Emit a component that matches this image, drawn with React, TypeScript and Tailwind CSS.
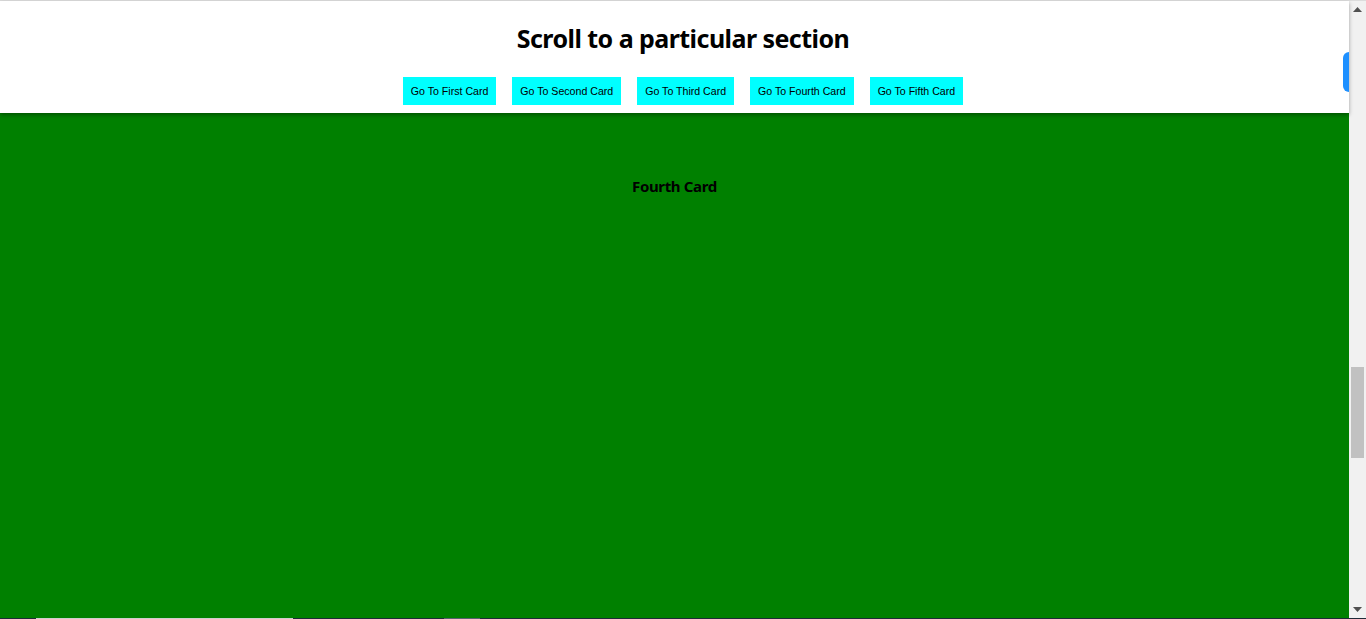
const cards = ["First", "Second", "Third", "Fourth", "Fifth"];

function Scrollbar() {
  return (
    <div className="flex w-[17px] shrink-0 flex-col items-center bg-[#f1f1f1]">
      <div className="flex h-[17px] w-full items-center justify-center">
        <svg width="9" height="5" viewBox="0 0 9 5" aria-hidden>
          <path d="M0 5 L4.5 0 L9 5 Z" fill="#505050" />
        </svg>
      </div>
      <div className="h-[349px] shrink-0" />
      <div className="h-[91px] w-[13px] shrink-0 bg-[#c1c1c1]" />
      <div className="flex-1" />
      <div className="flex h-[17px] w-full items-center justify-center">
        <svg width="9" height="5" viewBox="0 0 9 5" aria-hidden>
          <path d="M0 0 L9 0 L4.5 5 Z" fill="#505050" />
        </svg>
      </div>
    </div>
  );
}

export default function App() {
  return (
    <div className="flex h-[619px] w-full flex-col overflow-hidden bg-white">
      <div className="h-px shrink-0 bg-[#dcdcdc]" />
      <div className="flex min-h-0 flex-1">
        <main className="relative flex min-w-0 flex-1 flex-col">
          <header className="relative z-10 flex h-[112px] shrink-0 flex-col items-center bg-white pl-[17px] shadow-[0_2px_4px_rgba(0,0,0,0.35)]">
            <h1 className="mt-[21px] text-[25px] font-bold leading-[32px] tracking-[-0.55px] text-black [font-family:'Noto_Sans',sans-serif]">
              Scroll to a particular section
            </h1>
            <nav className="mt-[23px] flex gap-4">
              {cards.map((c) => (
                <button
                  key={c}
                  className="h-[28px] bg-[#00ffff] px-2 pt-px text-[10.6px] text-black [font-family:'Liberation_Sans',Arial,sans-serif]"
                >
                  Go To {c} Card
                </button>
              ))}
            </nav>
          </header>
          <section className="flex flex-1 justify-center bg-[#008000] pt-[63px]">
            <h3 className="text-[15px] font-bold leading-[20px] tracking-[-0.35px] text-black [font-family:'Noto_Sans',sans-serif]">
              Fourth Card
            </h3>
          </section>
          <div className="absolute right-0 top-[51px] z-20 h-[40px] w-[6px] rounded-l-md bg-[#1e90ff]" />
        </main>
        <Scrollbar />
      </div>
      <div className="flex h-px shrink-0 bg-[#1f2a38]">
        <div className="ml-[36px] w-[257px] bg-[#cfcfcf]" />
        <div className="ml-[151px] w-[36px] bg-[#596070]" />
      </div>
    </div>
  );
}
